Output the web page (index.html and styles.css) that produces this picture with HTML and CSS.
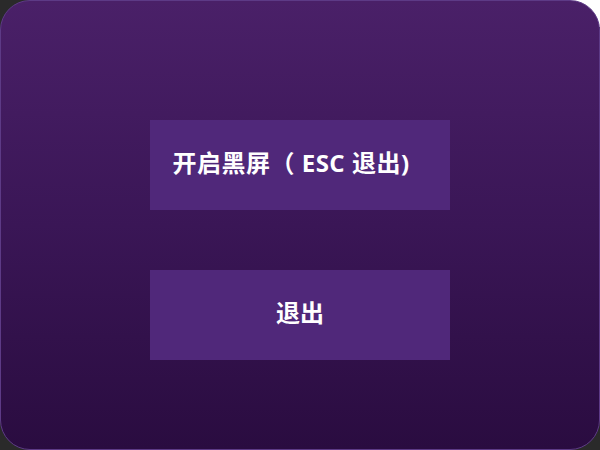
FILE: index.html
```html
<!DOCTYPE html>
<html lang="zh-CN">
<head>
<meta charset="utf-8">
<title>黑屏</title>
<link rel="stylesheet" href="styles.css">
</head>
<body>
<div class="window">
  <button class="btn btn-start">开启黑屏（ ESC 退出)</button>
  <button class="btn">退出</button>
</div>
</body>
</html>
```
FILE: styles.css
```css
html, body {
  margin: 0;
  padding: 0;
  width: 600px;
  height: 450px;
  overflow: hidden;
}
body {
  background: linear-gradient(to bottom left, #ffffff 0, #ffffff 22px, #2a2a2a 22px, #2a2a2a 100%);
}
.window {
  box-sizing: border-box;
  width: 600px;
  height: 450px;
  border-radius: 30px;
  border: 1px solid #5d3a86;
  background: linear-gradient(to bottom, #4a2068 0%, #3a1656 50%, #2a0c40 100%);
  display: flex;
  flex-direction: column;
  align-items: center;
  padding-top: 119px;
  gap: 60px;
}
.btn {
  width: 300px;
  height: 90px;
  border: none;
  margin: 0;
  padding: 0 0 8px 0;
  background: #50287a;
  color: #ffffff;
  font-family: "Open Sans", "Noto Sans CJK SC", sans-serif;
  font-weight: bold;
  font-size: 24px;
  cursor: pointer;
}
.btn-start {
  padding-right: 18px;
  letter-spacing: 0.5px;
}
```
